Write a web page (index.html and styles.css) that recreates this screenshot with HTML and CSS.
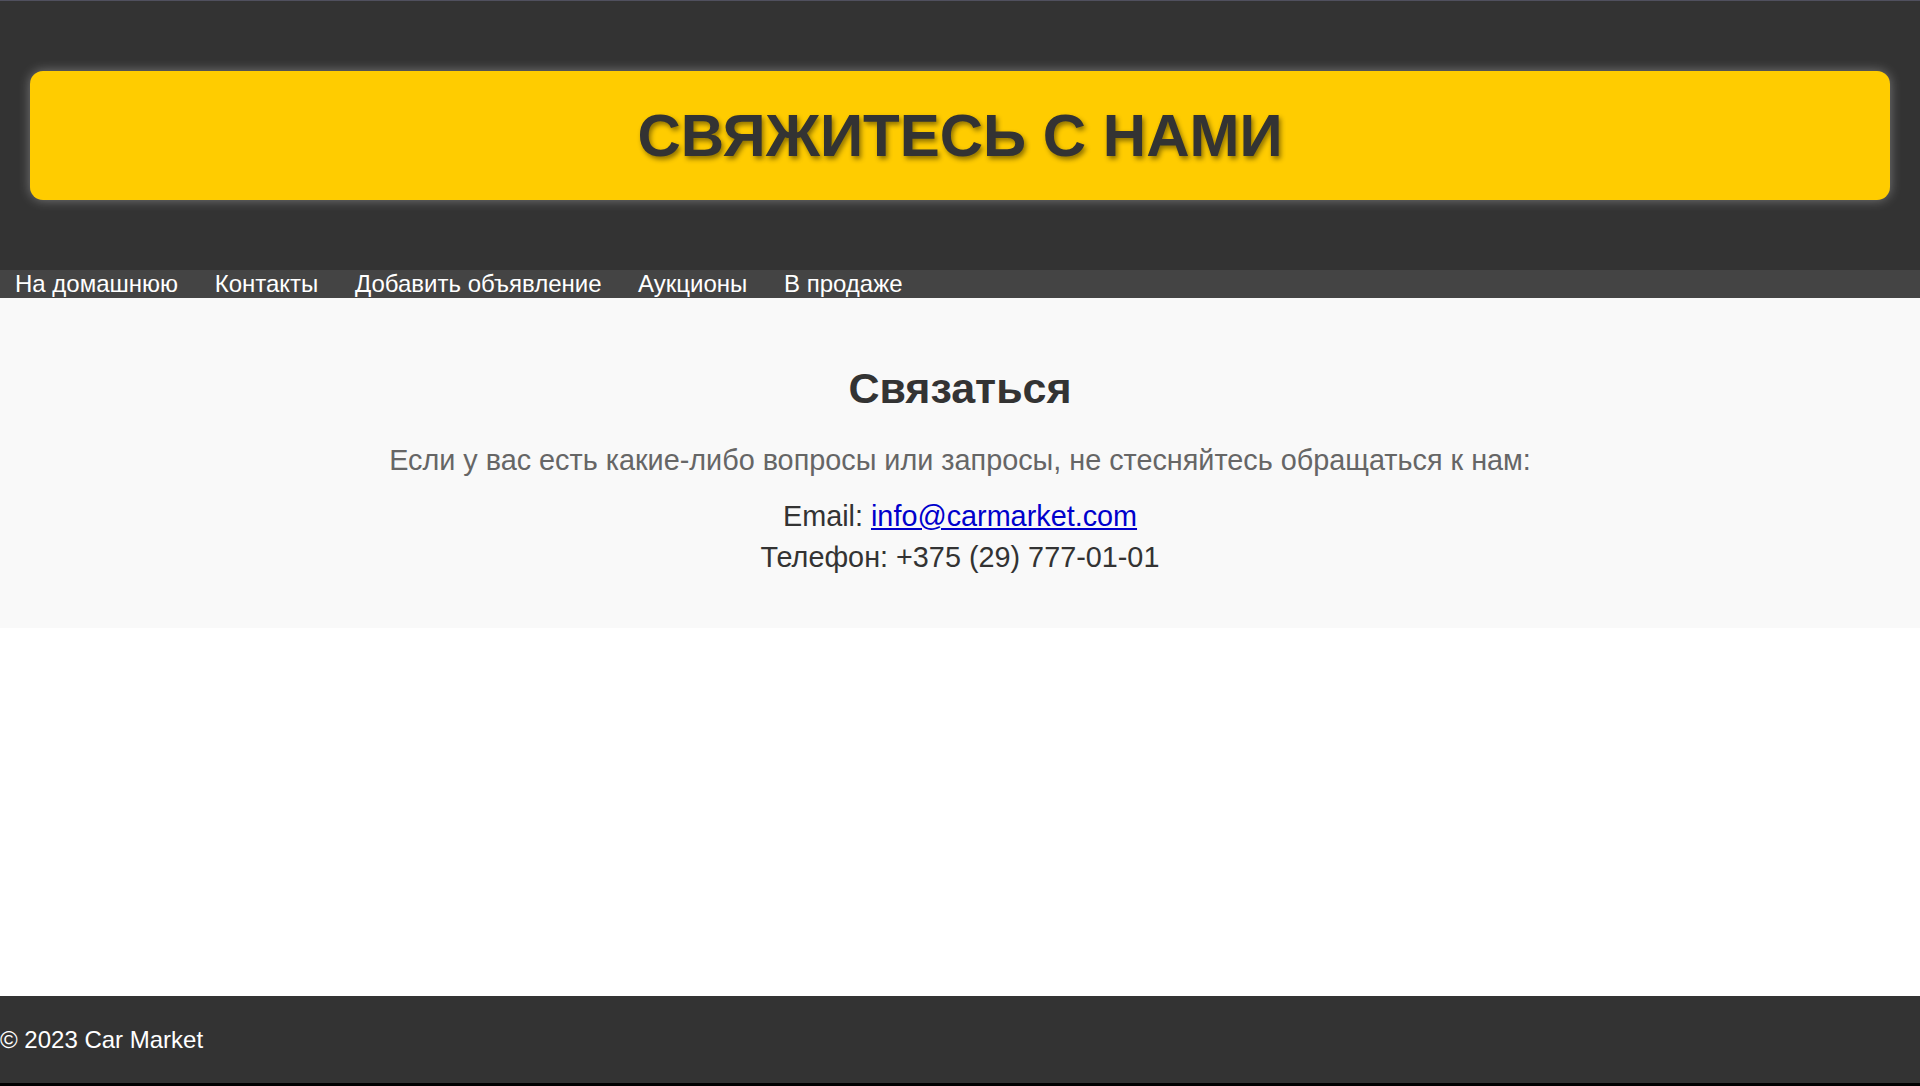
FILE: index.html
```html
<!DOCTYPE html>
<html lang="ru">
<head>
<meta charset="utf-8">
<title>Свяжитесь с нами</title>
<link rel="stylesheet" href="styles.css">
</head>
<body>
<header class="site-header">
  <div class="banner">
    <h1 class="banner-title">СВЯЖИТЕСЬ С НАМИ</h1>
  </div>
</header>
<nav class="main-nav">
  <a href="#">На домашнюю</a>
  <a href="#">Контакты</a>
  <a href="#">Добавить объявление</a>
  <a href="#">Аукционы</a>
  <a href="#">В продаже</a>
</nav>
<main class="contact">
  <h2 class="contact-title">Связаться</h2>
  <p class="contact-lead">Если у вас есть какие-либо вопросы или запросы, не стесняйтесь обращаться к нам:</p>
  <div class="contact-info">
    <div>Email: <a href="#">info@carmarket.com</a></div>
    <div>Телефон: +375 (29) 777-01-01</div>
  </div>
</main>
<div class="spacer"></div>
<footer class="site-footer">
  <p>© 2023 Car Market</p>
</footer>
</body>
</html>
```
FILE: styles.css
```css
html, body {
  margin: 0;
  padding: 0;
}
body {
  font-family: "Liberation Sans", Arial, sans-serif;
  background: #ffffff;
  height: 1086px;
  display: flex;
  flex-direction: column;
  overflow: hidden;
}
.site-header {
  background: #333333;
  border-top: 1px solid #50505e;
  padding: 70px 30px 70px;
}
.banner {
  background: #ffcc00;
  border-radius: 13px;
  height: 129px;
  display: flex;
  align-items: center;
  justify-content: center;
  box-shadow: 0 0 12px rgba(255, 255, 255, 0.35);
}
.banner-title {
  margin: 0;
  font-size: 60px;
  font-weight: bold;
  color: #333333;
  text-shadow: 2px 3px 5px rgba(0, 0, 0, 0.45);
}
.main-nav {
  background: #444444;
  height: 28px;
  display: flex;
  align-items: center;
  gap: 36.6px;
  padding-left: 15px;
}
.main-nav a {
  color: #ffffff;
  text-decoration: none;
  font-size: 24px;
  line-height: 28px;
}
.contact {
  background: #f9f9f9;
  height: 330px;
  box-sizing: border-box;
  padding-top: 60px;
  text-align: center;
}
.contact-title {
  margin: 0;
  font-size: 43px;
  line-height: 60px;
  color: #333333;
}
.contact-lead {
  margin: 22px 0 0;
  font-size: 28.8px;
  line-height: 40px;
  color: #666666;
}
.contact-info {
  margin-top: 16px;
  font-size: 28.8px;
  line-height: 41px;
  color: #333333;
}
.contact-info a {
  color: #0000cc;
}
.spacer {
  flex: 1;
}
.site-footer {
  background: #333333;
  color: #ffffff;
  height: 87px;
  border-bottom: 3px solid #000000;
  display: flex;
  align-items: center;
}
.site-footer p {
  margin: 0;
  font-size: 24px;
}
```
